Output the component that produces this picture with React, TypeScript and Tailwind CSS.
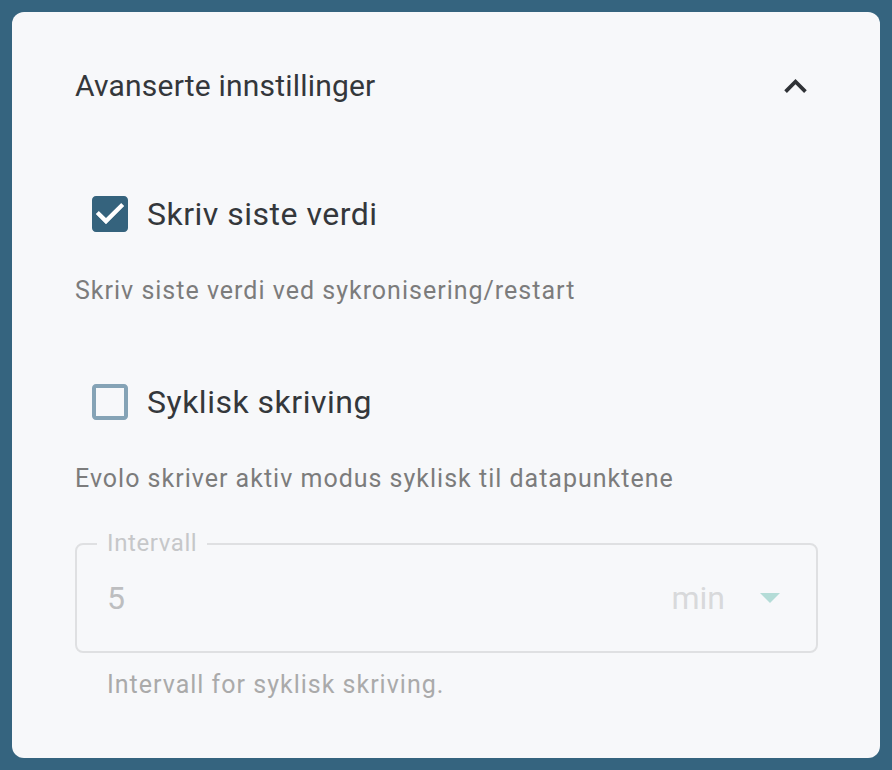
import React from "react";

const font = { fontFamily: "Roboto, 'Noto Sans', sans-serif" };

function CheckedBox() {
  return (
    <svg width="48" height="48" viewBox="0 0 24 24" className="shrink-0">
      <path
        fill="#35637d"
        d="M19 3H5c-1.11 0-2 .9-2 2v14c0 1.1.89 2 2 2h14c1.11 0 2-.9 2-2V5c0-1.1-.89-2-2-2zm-9 14l-5-5 1.41-1.41L10 14.17l7.59-7.59L19 8l-9 9z"
      />
      <path fill="#ffffff" d="M10 17l-5-5 1.41-1.41L10 14.17l7.59-7.59L19 8l-9 9z" />
    </svg>
  );
}

function EmptyBox() {
  return (
    <svg width="48" height="48" viewBox="0 0 24 24" className="shrink-0">
      <path
        fill="#85a3b6"
        d="M19 5v14H5V5h14m0-2H5c-1.1 0-2 .9-2 2v14c0 1.1.9 2 2 2h14c1.1 0 2-.9 2-2V5c0-1.1-.9-2-2-2z"
      />
    </svg>
  );
}

export default function App() {
  return (
    <div className="w-full h-[770px] bg-[#35647f] p-[12px]" style={font}>
      <div className="h-full rounded-[12px] bg-[#f7f8fa] pl-[63px] pr-[62px] flex flex-col">
        {/* Title row */}
        <div className="mt-[51px] h-[46px] flex items-center justify-between">
          <span className="text-[30px] leading-[46px] tracking-[0.2px] text-[#34373b]">Avanserte innstillinger</span>
          <svg width="45" height="45" viewBox="0 0 24 24">
            <path fill="#2f3236" d="M12 8l-6 6 1.41 1.41L12 10.83l4.59 4.58L18 14z" />
          </svg>
        </div>

        {/* Checkbox 1 */}
        <div className="mt-[81px] h-[48px] flex items-center pl-[11px]">
          <CheckedBox />
          <span className="ml-[13px] text-[32px] leading-[48px] tracking-[0.5px] text-[#34373b]">Skriv siste verdi</span>
        </div>
        <div className="mt-[38px] h-[30px] text-[25px] leading-[30px] tracking-[1px] text-[#7c7c7c]">
          Skriv siste verdi ved sykronisering/restart
        </div>

        {/* Checkbox 2 */}
        <div className="mt-[72px] h-[48px] flex items-center pl-[11px]">
          <EmptyBox />
          <span className="ml-[13px] text-[32px] leading-[48px] tracking-[0.5px] text-[#34373b]">Syklisk skriving</span>
        </div>
        <div className="mt-[38px] h-[30px] text-[25px] leading-[30px] tracking-[1px] text-[#7c7c7c]">
          Evolo skriver aktiv modus syklisk til datapunktene
        </div>

        {/* Text field */}
        <div className="mt-[49px] relative h-[110px] rounded-[8px] border-2 border-[#dfe0e2] flex items-center pl-[30px] pr-[36px]">
          <span className="absolute left-[20px] -top-[14px] px-[10px] bg-[#f7f8fa] text-[24px] leading-[24px] tracking-[0.6px] text-[#c6c7c9]">
            Intervall
          </span>
          <span className="flex-1 text-[32px] leading-[40px] text-[#bdbec0]">5</span>
          <span className="text-[32px] leading-[40px] text-[#d8d9db]">min</span>
          <svg width="20" height="10" viewBox="0 0 20 10" className="ml-[35px]">
            <path fill="#b4dcd7" d="M0 0l10 10 10-10z" />
          </svg>
        </div>
        <div className="mt-[17px] h-[30px] pl-[32px] text-[25px] leading-[30px] tracking-[1px] text-[#aaaaaa]">
          Intervall for syklisk skriving.
        </div>
      </div>
    </div>
  );
}
